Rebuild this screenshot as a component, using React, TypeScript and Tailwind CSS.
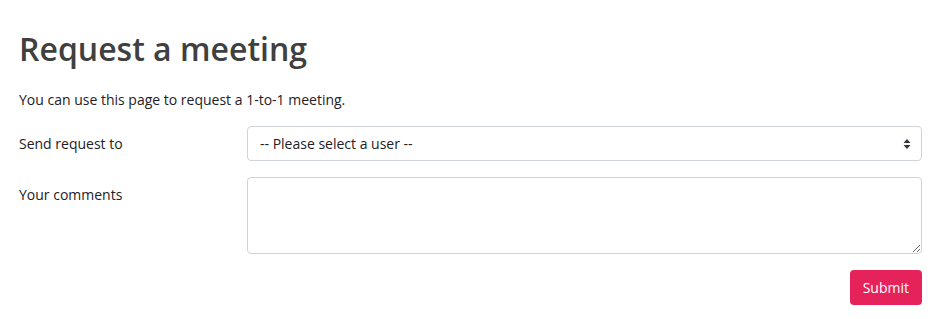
export default function App() {
    return (
        <div
            className="min-h-screen bg-white pl-[19px] pr-[22px] pt-[25px] text-[14px] text-[#1d2125]"
            style={{ fontFamily: '"Open Sans", sans-serif' }}
        >
            <h2 className="text-[32px] font-semibold leading-[48px] text-[#404040]">
                Request a meeting
            </h2>
            <p className="mt-[16px] leading-[21px]">
                You can use this page to request a 1-to-1 meeting.
            </p>
            <form className="mt-[16px] flex flex-col">
                <div className="flex items-start">
                    <label className="w-[228px] shrink-0 pt-[7px] leading-[21px]">
                        Send request to
                    </label>
                    <div className="flex h-[35px] flex-1 items-center rounded-[4px] border border-[#ced4da] pl-[12px] pr-[10px]">
                        <span className="flex-1 leading-[21px]">
                            -- Please select a user --
                        </span>
                        <svg
                            width="8"
                            height="12"
                            viewBox="0 0 8 12"
                            className="text-[#343a40]"
                        >
                            <path d="M4 1 L7.5 5 H0.5 Z" fill="currentColor" />
                            <path d="M4 11 L7.5 7 H0.5 Z" fill="currentColor" />
                        </svg>
                    </div>
                </div>
                <div className="mt-[16px] flex items-start">
                    <label className="w-[228px] shrink-0 pt-[7px] leading-[21px]">
                        Your comments
                    </label>
                    <textarea className="h-[77px] flex-1 rounded-[4px] border border-[#ced4da] px-[12px] py-[6px] outline-none" />
                </div>
                <div className="mt-[16px] flex justify-end">
                    <button
                        type="button"
                        className="h-[35px] rounded-[4px] bg-[#e5225a] px-[13px] leading-[21px] text-white"
                    >
                        Submit
                    </button>
                </div>
            </form>
        </div>
    );
}
